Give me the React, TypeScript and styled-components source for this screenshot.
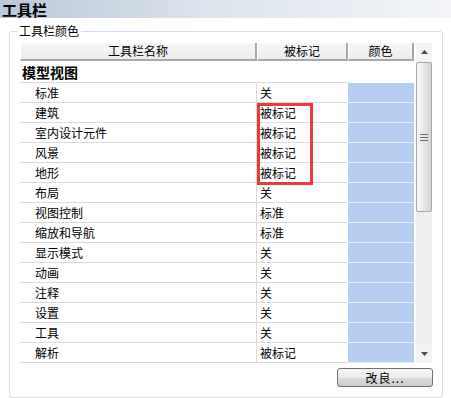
import React from 'react';
import styled, { createGlobalStyle } from 'styled-components';

const GlobalStyle = createGlobalStyle`
    html, body {
        margin: 0;
        padding: 0;
        background: #ffffff;
    }
    body {
        width: 451px;
        height: 398px;
        overflow: hidden;
        font-family: "Noto Sans CJK SC", "Noto Sans", sans-serif;
        font-size: 12px;
        color: #000000;
    }
`;

const Page = styled.div`
    width: 451px;
    height: 398px;
    display: flex;
    flex-direction: column;
`;

const TitleBar = styled.div`
    height: 18px;
    padding-left: 2px;
    display: flex;
    align-items: center;
    font-size: 15px;
    font-weight: 700;
    background: linear-gradient(to right, #b9c8da 0%, #dbe3ec 45%, #f3f5f8 100%);
`;

const Group = styled.fieldset`
    margin: 6px 8px 0 9px;
    padding: 5px 9px 6px 10px;
    border: 1px solid #d5dde6;
    border-radius: 3px;
    flex: 1;
    display: flex;
    flex-direction: column;
    min-width: 0;
`;

const Legend = styled.legend`
    padding: 0 2px;
    margin-left: -3px;
    font-size: 12px;
    line-height: 14px;
`;

const TableFrame = styled.div`
    display: flex;
    gap: 2px;
    height: 320px;
`;

const TableMain = styled.div`
    width: 394px;
    display: flex;
    flex-direction: column;
    position: relative;
`;

const HeaderRow = styled.div`
    display: grid;
    grid-template-columns: 237px 91px 66px;
    height: 18px;
`;

const HeaderCell = styled.div`
    background: linear-gradient(#f7f7f7, #ededed);
    border-right: 2px solid #a8a8a8;
    border-bottom: 2px solid #a8a8a8;
    border-left: 1px solid #ffffff;
    display: flex;
    align-items: center;
    justify-content: center;
    box-sizing: border-box;
    line-height: 14px;
`;

const SectionRow = styled.div`
    height: 20px;
    margin-top: 1px;
    padding-left: 2px;
    display: flex;
    align-items: center;
    font-size: 14px;
    font-weight: 700;
    border-bottom: 1px solid #dadada;
    width: 327px;
`;

const Row = styled.div`
    display: grid;
    grid-template-columns: 237px 90px 67px;
    height: 20px;
`;

const NameCell = styled.div`
    padding-left: 15px;
    display: flex;
    align-items: center;
    border-bottom: 1px solid #dadada;
    border-right: 1px solid #dadada;
    box-sizing: border-box;
`;

const MarkCell = styled.div`
    padding-left: 3px;
    display: flex;
    align-items: center;
    border-bottom: 1px solid #dadada;
    box-sizing: border-box;
`;

const ColorCell = styled.div<{ color: string }>`
    background: ${({ color }) => color};
    border-bottom: 1px solid #e4ecf7;
    margin-left: 1px;
    box-sizing: border-box;
`;

const Highlight = styled.div`
    position: absolute;
    left: 237px;
    top: 60px;
    width: 56px;
    height: 82px;
    border: 3px solid #ec3a3a;
    box-sizing: border-box;
    pointer-events: none;
`;

const ScrollBar = styled.div`
    width: 16px;
    display: flex;
    flex-direction: column;
    background: #efefef;
`;

const ArrowButton = styled.div`
    height: 18px;
    display: flex;
    align-items: center;
    justify-content: center;
    background: #f4f4f4;
`;

const Thumb = styled.div`
    height: 150px;
    margin: 1px 0 0 0;
    border: 1px solid #a7a7a7;
    border-radius: 2px;
    background: linear-gradient(to right, #f7f7f7, #e8e8e8 50%, #d4d4d4);
    display: flex;
    align-items: center;
    justify-content: center;
    box-sizing: border-box;
`;

const Track = styled.div`
    flex: 1;
`;

const Footer = styled.div`
    display: flex;
    justify-content: flex-end;
    margin-top: 5px;
`;

const Button = styled.button`
    width: 96px;
    height: 19px;
    padding: 0;
    border: 1px solid #6f6f6f;
    border-radius: 3px;
    background: linear-gradient(#f4f4f4 0%, #ebebeb 50%, #dadada 51%, #cfcfcf 100%);
    font-family: "Noto Sans CJK SC", "Noto Sans", sans-serif;
    font-size: 12px;
    line-height: 14px;
    color: #000000;
    letter-spacing: 1px;
`;

interface ToolbarItem {
    name: string;
    mark: string;
}

const items: ToolbarItem[] = [
    { name: '标准', mark: '关' },
    { name: '建筑', mark: '被标记' },
    { name: '室内设计元件', mark: '被标记' },
    { name: '风景', mark: '被标记' },
    { name: '地形', mark: '被标记' },
    { name: '布局', mark: '关' },
    { name: '视图控制', mark: '标准' },
    { name: '缩放和导航', mark: '标准' },
    { name: '显示模式', mark: '关' },
    { name: '动画', mark: '关' },
    { name: '注释', mark: '关' },
    { name: '设置', mark: '关' },
    { name: '工具', mark: '关' },
    { name: '解析', mark: '被标记' },
];

const App: React.FC = () => {
    return (
        <>
            <GlobalStyle />
            <Page>
                <TitleBar>工具栏</TitleBar>
                <Group>
                    <Legend>工具栏颜色</Legend>
                    <TableFrame>
                        <TableMain>
                            <HeaderRow>
                                <HeaderCell>工具栏名称</HeaderCell>
                                <HeaderCell>被标记</HeaderCell>
                                <HeaderCell>颜色</HeaderCell>
                            </HeaderRow>
                            <SectionRow>模型视图</SectionRow>
                            {items.map((item) => (
                                <Row key={item.name}>
                                    <NameCell>{item.name}</NameCell>
                                    <MarkCell>{item.mark}</MarkCell>
                                    <ColorCell color="#b5cdf1" />
                                </Row>
                            ))}
                            <Highlight />
                        </TableMain>
                        <ScrollBar>
                            <ArrowButton>
                                <svg width="7" height="4" viewBox="0 0 7 4">
                                    <path d="M0 4 L3.5 0 L7 4 Z" fill="#4a4a4a" />
                                </svg>
                            </ArrowButton>
                            <Thumb>
                                <svg width="8" height="7" viewBox="0 0 8 7">
                                    <path d="M0 0.5 H8 M0 3.5 H8 M0 6.5 H8" stroke="#6a6a6a" strokeWidth="1" />
                                </svg>
                            </Thumb>
                            <Track />
                            <ArrowButton>
                                <svg width="7" height="4" viewBox="0 0 7 4">
                                    <path d="M0 0 L3.5 4 L7 0 Z" fill="#4a4a4a" />
                                </svg>
                            </ArrowButton>
                        </ScrollBar>
                    </TableFrame>
                    <Footer>
                        <Button>改良...</Button>
                    </Footer>
                </Group>
            </Page>
        </>
    );
};

export default App;
